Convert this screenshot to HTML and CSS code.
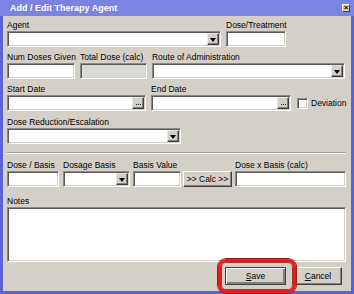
FILE: index.html
```html
<!DOCTYPE html>
<html>
<head>
<meta charset="utf-8">
<link rel="stylesheet" href="styles.css">
</head>
<body>
<div class="window">
  <div class="titlebar">
    <span class="title">Add / Edit Therapy Agent</span>
    <span class="close">×</span>
  </div>
  <div class="client">
    <div class="row r1">
      <div class="field"><div class="lbl">Agent</div><div class="inp combo w-agent"><span class="arrow"></span></div></div>
      <div class="field"><div class="lbl">Dose/Treatment</div><div class="inp w-dose"></div></div>
    </div>
    <div class="row r2">
      <div class="field"><div class="lbl">Num Doses Given</div><div class="inp w-num"></div></div>
      <div class="field"><div class="lbl">Total Dose (calc)</div><div class="inp disabled w-total"></div></div>
      <div class="field"><div class="lbl">Route of Administration</div><div class="inp combo w-route"><span class="arrow"></span></div></div>
    </div>
    <div class="row r3">
      <div class="field"><div class="lbl">Start Date</div><div class="inp combo w-start"><span class="dots" title="..."></span></div></div>
      <div class="field"><div class="lbl">End Date</div><div class="inp combo w-end"><span class="dots" title="..."></span></div></div>
      <div class="check"><span class="cbox"></span><span>Deviation</span></div>
    </div>
    <div class="row r4">
      <div class="field"><div class="lbl">Dose Reduction/Escalation</div><div class="inp combo w-red"><span class="arrow"></span></div></div>
    </div>
    <div class="sep"></div>
    <div class="row r5">
      <div class="field"><div class="lbl">Dose / Basis</div><div class="inp w-db"></div></div>
      <div class="field"><div class="lbl">Dosage Basis</div><div class="inp combo w-dsb"><span class="arrow"></span></div></div>
      <div class="field"><div class="lbl">Basis Value</div><div class="inp w-bv"></div></div>
      <div class="field"><div class="lbl"></div><div class="btn calc">&gt;&gt; Calc &gt;&gt;</div></div>
      <div class="field"><div class="lbl">Dose x Basis (calc)</div><div class="inp w-dxb"></div></div>
    </div>
    <div class="field notes"><div class="lbl">Notes</div><div class="inp area"></div></div>
    <div class="buttons">
      <div class="btn save default"><u>S</u>ave</div>
      <div class="btn cancel"><u>C</u>ancel</div>
    </div>
  </div>
</div>
<div class="highlight"></div>
</body>
</html>
```
FILE: styles.css
```css
body {
  margin: 0;
  position: relative;
  font-family: "Liberation Sans", Arial, sans-serif;
  font-size: 8.5px;
  color: #000;
  background: #fff;
}
.window {
  width: 354px;
  height: 294px;
  box-sizing: border-box;
  background: #d4d0c8;
  border: 3px solid #5a62d4;
  border-top: 0;
  display: flex;
  flex-direction: column;
}
.titlebar {
  height: 16px;
  margin: 0 -3px;
  background: #7a82e2;
  display: flex;
  align-items: center;
  justify-content: space-between;
  padding: 0 4px 0 10px;
  flex-shrink: 0;
}
.title {
  color: #fff;
  font-weight: bold;
  font-size: 9px;
}
.close {
  width: 8px;
  height: 8px;
  box-sizing: border-box;
  background: #d4d0c8;
  border: 1px solid;
  border-color: #fff #404040 #404040 #fff;
  font-size: 8px;
  line-height: 5px;
  text-align: center;
  font-weight: bold;
  color: #000;
}
.client {
  padding: 4px 5px 0 4px;
  display: flex;
  flex-direction: column;
}
.row {
  display: flex;
  align-items: flex-end;
}
.field {
  display: flex;
  flex-direction: column;
}
.lbl {
  height: 11px;
  line-height: 10px;
  white-space: nowrap;
}
.inp {
  height: 16px;
  box-sizing: border-box;
  background: #fff;
  border: 1px solid;
  border-color: #8a8a8a #fff #fff #8a8a8a;
  box-shadow: inset 1px 1px #5a5a5a, inset -1px -1px #d4d0c8;
}
.combo {
  display: flex;
  justify-content: flex-end;
  padding: 1px;
}
.arrow, .dots {
  width: 12px;
  box-sizing: border-box;
  background: #d4d0c8;
  border: 1px solid;
  border-color: #e8e8e8 #404040 #404040 #e8e8e8;
  box-shadow: inset -1px -1px #808080;
  display: flex;
  align-items: center;
  justify-content: center;
}
.arrow::before {
  content: "";
  border-left: 3.5px solid transparent;
  border-right: 3.5px solid transparent;
  border-top: 4px solid #000;
  margin-top: 1px;
}
.dots {
  align-items: flex-end;
  justify-content: flex-start;
  padding: 0 0 3px 3px;
}
.dots::before {
  content: "";
  width: 1px;
  height: 1px;
  background: #222;
  box-shadow: 2px 0 #222, 4px 0 #222;
}
.disabled { background: #dddbd6; }

.r1 { gap: 5px; }
.r2 { gap: 4px; margin-top: 5px; }
.r2 .field:nth-child(2) { margin-right: 1px; }
.r3 { gap: 5px; margin-top: 5px; }
.r4 { margin-top: 6px; }
.r5 { margin-top: 6px; }

.w-agent { width: 214px; }
.w-dose { width: 60px; }
.w-num { width: 68px; }
.w-total { width: 67px; }
.w-route { width: 193px; }
.w-start { width: 139px; }
.w-end { width: 140px; }
.w-red { width: 174px; }
.w-db { width: 52px; }
.w-dsb { width: 67px; }
.w-bv { width: 48px; }
.w-dxb { width: 111px; }

.r5 .field:nth-child(1) { margin-right: 4px; }
.r5 .field:nth-child(2) { margin-right: 3px; }
.r5 .field:nth-child(3) { margin-right: 2px; }
.r5 .field:nth-child(4) { margin-right: 3px; }

.check {
  height: 16px;
  display: flex;
  align-items: center;
  gap: 3px;
  margin-left: 1px;
}
.cbox {
  width: 11px;
  height: 11px;
  box-sizing: border-box;
  background: #fff;
  border: 1px solid;
  border-color: #8a8a8a #fff #fff #8a8a8a;
  box-shadow: inset 1px 1px #5a5a5a, inset -1px -1px #d4d0c8;
}
.sep {
  margin-top: 8px;
  border-top: 1px solid #a0a0a0;
  border-bottom: 1px solid #fff;
}
.notes { margin-top: 9px; }
.area { height: 55px; }

.btn {
  box-sizing: border-box;
  background: #d4d0c8;
  border: 1px solid;
  border-color: #fff #404040 #404040 #fff;
  box-shadow: inset -1px -1px #808080;
  display: flex;
  align-items: center;
  justify-content: center;
  white-space: nowrap;
}
.calc {
  width: 49px;
  height: 16px;
}
.buttons {
  display: flex;
  justify-content: flex-end;
  gap: 8px;
  margin-top: 5px;
  margin-right: 4px;
}
.save { width: 61px; height: 18px; }
.default {
  border-color: #404040;
  box-shadow: inset 1px 1px #fff, inset -2px -2px #808080;
}
.cancel { width: 48px; height: 18px; }
.highlight {
  position: absolute;
  left: 218px;
  top: 259px;
  width: 78px;
  height: 34px;
  box-sizing: border-box;
  border: 3px solid #e41c1c;
  border-radius: 8px;
  box-shadow: 0 0 0 1px #9a2020, inset 0 0 0 1px #b03030;
}
```
